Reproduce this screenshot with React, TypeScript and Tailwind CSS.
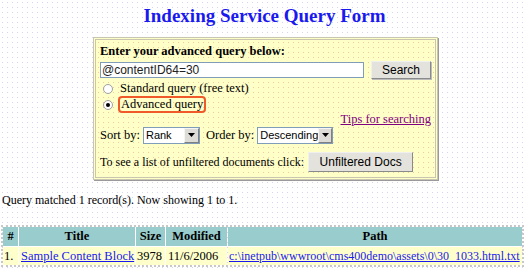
import React from "react";

function Select({ label, w }: { label: string; w: string }) {
  return (
    <div
      className={`${w} ml-[3px] h-[17px] border border-[#7f9db9] bg-white flex items-center text-[11px] pl-[2px] justify-between`}
      style={{ fontFamily: '"Liberation Sans", Arial, sans-serif' }}
    >
      <span>{label}</span>
      <span className="w-[15px] h-[15px] bg-[#dedcd6] border border-[#f5f5f5] border-r-[#808080] border-b-[#808080] flex items-center justify-center">
        <svg width="7" height="4" viewBox="0 0 7 4"><path d="M0 0h7L3.5 4z" fill="#000" /></svg>
      </span>
    </div>
  );
}

export default function App() {
  return (
    <div
      className="w-[525px] h-[270px] overflow-hidden bg-white bg-[radial-gradient(#d6d4f2_0.7px,transparent_0.8px)] bg-[length:5px_5px] text-black"
      style={{ fontFamily: '"Liberation Serif", "Times New Roman", serif' }}
    >
      <div className="pt-[4px] text-center text-[19px] leading-[24px] font-bold text-[#1a1aee] pl-[4px]">
        Indexing Service Query Form
      </div>
      <div className="flex justify-center mt-[9px] pl-[6px]">
        <div className="w-[345px] border-[3px] border-[#c8c6b0] border-double bg-[#ffffc8] bg-[radial-gradient(#f2caa6_0.7px,transparent_0.8px)] bg-[length:5px_5px] px-[4px] pt-[3px] pb-[5px] shadow-[1px_1px_0_#9a9a9a]">
          <div className="text-[12.5px] font-bold leading-[16px]">Enter your advanced query below:</div>
          <div className="flex items-center gap-[7px] mt-[2px]">
            <div
              className="w-[264px] h-[16px] border border-[#7f9db9] bg-white text-[12px] leading-[14px] pl-[1px] text-[#222]"
              style={{ fontFamily: '"Liberation Sans", Arial, sans-serif' }}
            >
              @contentID64=30
            </div>
            <button
              className="w-[60px] h-[18px] bg-[#e4e2dc] border border-[#f0f0f0] border-r-[#8a8a8a] border-b-[#8a8a8a] text-[12px] leading-[14px] shadow-[1px_1px_0_#bbb]"
              style={{ fontFamily: '"Liberation Sans", Arial, sans-serif' }}
            >
              Search
            </button>
          </div>
          <div className="flex items-center mt-[2px] h-[15px] text-[12.5px]">
            <span className="w-[10px] h-[10px] rounded-full border border-[#a0a0a0] bg-white ml-[3px] mr-[7px]" />
            <span>Standard query (free text)</span>
          </div>
          <div className="flex items-center h-[17px] text-[12.5px]">
            <span className="w-[10px] h-[10px] rounded-full border border-[#a0a0a0] bg-white ml-[3px] mr-[5px] flex items-center justify-center">
              <span className="w-[4px] h-[4px] rounded-full bg-black" />
            </span>
            <span className="border-2 border-[#f05a2a] rounded-[4px] px-[1px] leading-[13px]">Advanced query</span>
          </div>
          <div className="flex justify-end text-[12.5px] leading-[15px] -mt-[1px]">
            <span className="text-[#800080] underline">Tips for searching</span>
          </div>
          <div className="flex items-center -mt-[2px] text-[12.5px] h-[20px]">
            <span>Sort by:</span>
            <Select label="Rank" w="w-[57px]" />
            <span className="ml-[6px]">Order by:</span>
            <Select label="Descending" w="w-[76px]" />
          </div>
          <div className="flex items-center mt-[7px] text-[12px]">
            <span>To see a list of unfiltered documents click:</span>
            <button
              className="ml-[4px] w-[105px] h-[20px] bg-[#e4e2dc] border border-[#f0f0f0] border-r-[#8a8a8a] border-b-[#8a8a8a] text-[12px] leading-[14px]"
              style={{ fontFamily: '"Liberation Sans", Arial, sans-serif' }}
            >
              Unfiltered Docs
            </button>
          </div>
        </div>
      </div>
      <div className="mt-[12px] pl-[2px] text-[12px] leading-[16px]">
        Query matched 1 record(s). Now showing 1 to 1.
      </div>
      <div className="mt-[17px] ml-[1px] w-[523px] border-2 border-dotted border-[#c8c8c8]">
        <div className="grid grid-cols-[15px_116px_29px_61px_1fr] gap-[1px] text-[12.5px]">
          <div className="bg-[#99cccc] font-bold text-center h-[19px] leading-[19px]">#</div>
          <div className="bg-[#99cccc] font-bold text-center h-[19px] leading-[19px]">Title</div>
          <div className="bg-[#99cccc] font-bold text-center h-[19px] leading-[19px]">Size</div>
          <div className="bg-[#99cccc] font-bold text-center h-[19px] leading-[19px]">Modified</div>
          <div className="bg-[#99cccc] font-bold text-center h-[19px] leading-[19px]">Path</div>
          <div className="bg-[#ffffcc] h-[18px] leading-[18px] pl-[1px]">1.</div>
          <div className="bg-[#ffffcc] h-[18px] leading-[18px] pl-[2px] text-[#1a1aee] underline whitespace-nowrap overflow-hidden">Sample Content Block</div>
          <div className="bg-[#ffffcc] h-[18px] leading-[18px] pl-[1px]">3978</div>
          <div className="bg-[#ffffcc] h-[18px] leading-[18px] pl-[2px]">11/6/2006</div>
          <div className="bg-[#ffffcc] h-[18px] leading-[18px] pl-[1px] text-[12px] text-[#1a1aee] underline whitespace-nowrap overflow-hidden">c:\inetpub\wwwroot\cms400demo\assets\0\30_1033.html.txt</div>
        </div>
      </div>
    </div>
  );
}
